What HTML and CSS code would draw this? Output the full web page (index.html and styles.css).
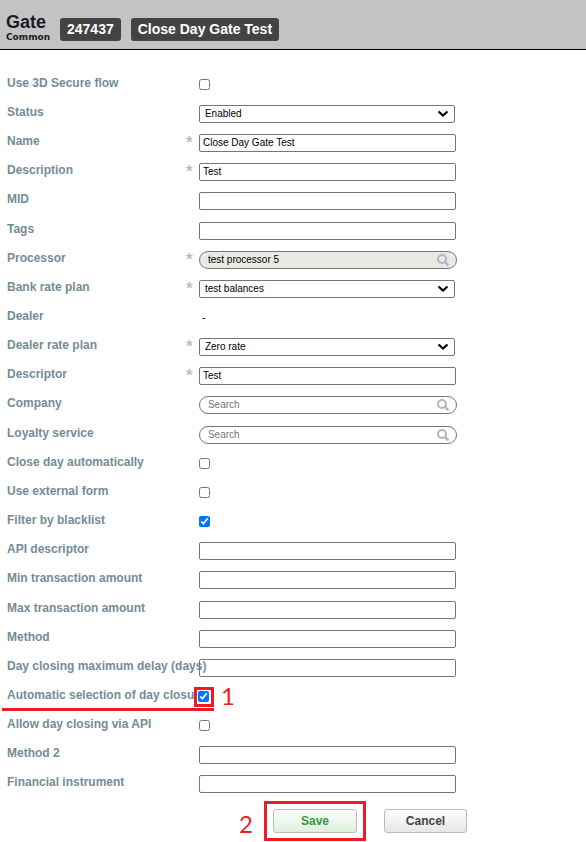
FILE: index.html
```html
<!DOCTYPE html>
<html lang="en">
  <head>
    <meta charset="UTF-8" />
    <meta name="viewport" content="width=device-width, initial-scale=1" />
    <title>Gate 247437 - Close Day Gate Test</title>
    <link rel="stylesheet" href="styles.css" />
  </head>
  <body>
    <svg class="sprite" aria-hidden="true">
      <symbol id="chevron" viewBox="0 0 12 8">
        <path d="M1.5 1.5 L6 5.5 L10.5 1.5" fill="none" stroke="#000" stroke-width="2.2" />
      </symbol>
      <symbol id="magnifier" viewBox="0 0 12 12">
        <circle cx="5" cy="5" r="4" fill="none" stroke="#b3b3c6" stroke-width="2" />
        <path d="M7.8 7.8 L11.4 11.4" stroke="#b3b3c6" stroke-width="2.4" />
      </symbol>
    </svg>

    <header class="header">
      <h1 class="title">
        <span>Gate</span>
        <small>Common</small>
      </h1>
      <span class="tag">247437</span>
      <span class="tag">Close Day Gate Test</span>
    </header>

    <form class="gate-form">
      <div class="group">
        <div class="row">
          <label for="secure">Use 3D Secure flow</label>
          <div class="field"><input type="checkbox" id="secure" /></div>
        </div>
        <div class="row">
          <label for="status">Status</label>
          <div class="field">
            <select id="status"><option>Enabled</option></select>
            <svg class="chevron"><use href="#chevron" /></svg>
          </div>
        </div>
        <div class="row">
          <label for="name">Name</label>
          <span class="star">*</span>
          <div class="field"><input type="text" id="name" value="Close Day Gate Test" /></div>
        </div>
        <div class="row">
          <label for="description">Description</label>
          <span class="star">*</span>
          <div class="field"><input type="text" id="description" value="Test" /></div>
        </div>
        <div class="row">
          <label for="mid">MID</label>
          <div class="field"><input type="text" id="mid" /></div>
        </div>
      </div>

      <div class="group">
        <div class="row">
          <label for="tags">Tags</label>
          <div class="field"><input type="text" id="tags" /></div>
        </div>
        <div class="row">
          <label for="processor">Processor</label>
          <span class="star">*</span>
          <div class="field">
            <input type="text" class="search" id="processor" value="test processor 5" readonly />
            <svg class="magnifier"><use href="#magnifier" /></svg>
          </div>
        </div>
        <div class="row">
          <label for="bank-plan">Bank rate plan</label>
          <span class="star">*</span>
          <div class="field">
            <select id="bank-plan"><option>test balances</option></select>
            <svg class="chevron"><use href="#chevron" /></svg>
          </div>
        </div>
        <div class="row">
          <span class="label">Dealer</span>
          <div class="field"><span class="value">-</span></div>
        </div>
        <div class="row">
          <label for="dealer-plan">Dealer rate plan</label>
          <span class="star">*</span>
          <div class="field">
            <select id="dealer-plan"><option>Zero rate</option></select>
            <svg class="chevron"><use href="#chevron" /></svg>
          </div>
        </div>
        <div class="row">
          <label for="descriptor">Descriptor</label>
          <span class="star">*</span>
          <div class="field"><input type="text" id="descriptor" value="Test" /></div>
        </div>
        <div class="row">
          <label for="company">Company</label>
          <div class="field">
            <input type="text" class="search" id="company" placeholder="Search" />
            <svg class="magnifier"><use href="#magnifier" /></svg>
          </div>
        </div>
      </div>

      <div class="group">
        <div class="row">
          <label for="loyalty">Loyalty service</label>
          <div class="field">
            <input type="text" class="search" id="loyalty" placeholder="Search" />
            <svg class="magnifier"><use href="#magnifier" /></svg>
          </div>
        </div>
        <div class="row">
          <label for="close-day">Close day automatically</label>
          <div class="field"><input type="checkbox" id="close-day" /></div>
        </div>
        <div class="row">
          <label for="external">Use external form</label>
          <div class="field"><input type="checkbox" id="external" /></div>
        </div>
        <div class="row">
          <label for="blacklist">Filter by blacklist</label>
          <div class="field"><input type="checkbox" id="blacklist" checked /></div>
        </div>
        <div class="row">
          <label for="api-descriptor">API descriptor</label>
          <div class="field"><input type="text" id="api-descriptor" /></div>
        </div>
        <div class="row">
          <label for="min-amount">Min transaction amount</label>
          <div class="field"><input type="text" id="min-amount" /></div>
        </div>
      </div>

      <div class="group">
        <div class="row">
          <label for="max-amount">Max transaction amount</label>
          <div class="field"><input type="text" id="max-amount" /></div>
        </div>
        <div class="row">
          <label for="method">Method</label>
          <div class="field"><input type="text" id="method" /></div>
        </div>
        <div class="row">
          <label for="delay">Day closing maximum delay (days)</label>
          <div class="field"><input type="text" id="delay" /></div>
        </div>
        <div class="row marked">
          <label for="auto-closure">Automatic selection of day closure</label>
          <div class="field">
            <span class="check-frame"><input type="checkbox" id="auto-closure" checked /></span>
            <span class="step step-one">1</span>
          </div>
        </div>
        <div class="row">
          <label for="allow-api">Allow day closing via API</label>
          <div class="field"><input type="checkbox" id="allow-api" /></div>
        </div>
        <div class="row">
          <label for="method2">Method 2</label>
          <div class="field"><input type="text" id="method2" /></div>
        </div>
        <div class="row">
          <label for="instrument">Financial instrument</label>
          <div class="field"><input type="text" id="instrument" /></div>
        </div>
      </div>

      <div class="actions">
        <span class="save-frame">
          <span class="step step-two">2</span>
          <button type="submit" class="save">Save</button>
        </span>
        <button type="button">Cancel</button>
      </div>
    </form>
  </body>
</html>
```
FILE: styles.css
```css
* {
  box-sizing: border-box;
}
body {
  margin: 0;
  background-color: #ffffff;
  font-family: "Liberation Sans", Arial, sans-serif;
  font-size: 12px;
}
.sprite {
  display: none;
}

/* header */
.header {
  display: flex;
  align-items: flex-end;
  height: 50px;
  padding: 0 6px 6px;
  background-color: #c3c3c3;
  border-bottom: 1px solid #000000;
}
.title {
  display: flex;
  flex-direction: column;
  width: 54px;
  margin: 0;
  color: #1a1a24;
  font-size: 18px;
  line-height: 19px;
}
.title small {
  font-family: "DejaVu Sans", Verdana, sans-serif;
  font-size: 9px;
  line-height: 11px;
}
.tag {
  margin: 0 10px 2px 0;
  padding: 0 7px;
  border-radius: 3px;
  background-color: #434343;
  color: #ffffff;
  font-size: 14px;
  font-weight: bold;
  line-height: 23px;
}

/* form rows */
.gate-form {
  display: flex;
  flex-direction: column;
  gap: 1px;
  max-width: 464px;
  padding: 18px 0 0 7px;
}
.row {
  display: flex;
  align-items: center;
  position: relative;
  height: 29px;
}
.row label,
.row .label {
  flex: 1 1 0;
  min-width: 0;
  color: #748c97;
  font-weight: bold;
  line-height: 14px;
  white-space: nowrap;
}
.star {
  width: 13px;
  height: 13px;
  color: #bdbdbd;
  font-size: 17px;
  font-weight: bold;
  line-height: 17px;
}
.field {
  display: flex;
  align-items: center;
  position: relative;
  width: 58%;
  height: 18px;
  margin-top: 4px;
}
input[type="text"],
select {
  width: 257px;
  height: 18px;
  margin: 0;
  padding: 0 3px;
  border: 1px solid #767676;
  border-radius: 2px;
  background-color: transparent;
  color: #000000;
  font-family: inherit;
  font-size: 10px;
}
select {
  width: 256px;
  padding: 0 5px;
  appearance: none;
}
input.search {
  width: 258px;
  padding: 0 24px 0 8px;
  border-radius: 9px;
}
input.search:read-only {
  background-color: #eaeae3;
}
input::placeholder {
  color: #757575;
}
input[type="checkbox"] {
  width: 11px;
  height: 11px;
  margin: 0;
}
.value {
  padding-left: 3px;
  font-size: 10px;
}
.chevron,
.magnifier {
  position: absolute;
  top: 3px;
  left: 238px;
  width: 12px;
  height: 12px;
  pointer-events: none;
}

/* numbered steps */
.marked::after {
  content: "";
  position: absolute;
  bottom: -2px;
  left: -5px;
  width: 212px;
  height: 3px;
  background-color: #ed1c24;
}
.check-frame {
  display: flex;
  align-items: center;
  justify-content: center;
  width: 20px;
  height: 20px;
  margin-left: -5px;
  border: 3px solid #ed1c24;
  background-color: #ffffff;
}
.step {
  position: absolute;
  color: #ed1c24;
  font-family: Lato, sans-serif;
  font-size: 24px;
  font-weight: normal;
  line-height: 24px;
}
.step-one {
  top: -4px;
  left: 22px;
}
.step-two {
  top: 8px;
  left: -28px;
}

/* buttons */
.actions {
  display: flex;
  justify-content: flex-end;
  align-items: center;
  gap: 18px;
  height: 40px;
  margin: 4px -3px 0 0;
}
.save-frame {
  position: relative;
  padding: 5px 6px;
  border: 3px solid #ed1c24;
}
button {
  width: 83px;
  height: 24px;
  padding: 0;
  border: 1px solid #bbbbbb;
  border-radius: 3px;
  background: linear-gradient(#ffffff, #e6e6e6);
  color: #444444;
  font-family: inherit;
  font-size: 12px;
  font-weight: bold;
  cursor: pointer;
}
button.save {
  width: 84px;
  background: linear-gradient(#ffffff, #dcf0dc);
  color: #339940;
}
```
